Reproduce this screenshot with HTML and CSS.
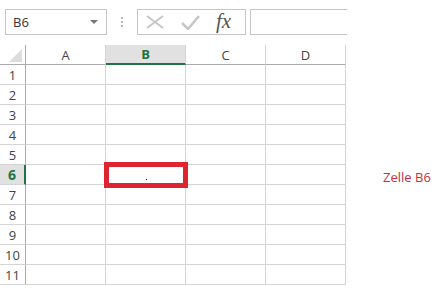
FILE: index.html
```html
<!DOCTYPE html>
<html lang="de">
<head>
    <meta charset="UTF-8">
    <title>Zelle B6</title>
    <link rel="stylesheet" href="styles.css">
</head>
<body>
    <div class="toolbar">
        <div class="name-box">
            <span>B6</span>
            <span class="arrow"></span>
        </div>
        <div class="dots"><i></i><i></i><i></i></div>
        <div class="fx-box">
            <svg class="icon" width="18" height="14" viewBox="0 0 18 14">
                <path d="M1 1 L17 13 M17 1 L1 13" stroke="#c6c6c6" stroke-width="2" fill="none"/>
            </svg>
            <svg class="icon" width="19" height="15" viewBox="0 0 19 15">
                <path d="M1 8 L7 14 L18 1" stroke="#c6c6c6" stroke-width="2.6" fill="none"/>
            </svg>
            <span class="fx">fx</span>
        </div>
        <div class="formula"></div>
    </div>

    <div class="wrap">
        <div class="sheet">
            <div class="corner"><span class="tri"></span></div>
            <div class="col">A</div>
            <div class="col active">B</div>
            <div class="col">C</div>
            <div class="col">D</div>

            <div class="row">1</div><div class="cell"></div><div class="cell"></div><div class="cell"></div><div class="cell"></div>
            <div class="row">2</div><div class="cell"></div><div class="cell"></div><div class="cell"></div><div class="cell"></div>
            <div class="row">3</div><div class="cell"></div><div class="cell"></div><div class="cell"></div><div class="cell"></div>
            <div class="row">4</div><div class="cell"></div><div class="cell"></div><div class="cell"></div><div class="cell"></div>
            <div class="row">5</div><div class="cell"></div><div class="cell"></div><div class="cell"></div><div class="cell"></div>
            <div class="row active">6</div><div class="cell"></div><div class="cell selected"><span class="mark"></span><span class="dot"></span></div><div class="cell"></div><div class="cell"></div>
            <div class="row">7</div><div class="cell"></div><div class="cell"></div><div class="cell"></div><div class="cell"></div>
            <div class="row">8</div><div class="cell"></div><div class="cell"></div><div class="cell"></div><div class="cell"></div>
            <div class="row">9</div><div class="cell"></div><div class="cell"></div><div class="cell"></div><div class="cell"></div>
            <div class="row">10</div><div class="cell"></div><div class="cell"></div><div class="cell"></div><div class="cell"></div>
            <div class="row">11</div><div class="cell"></div><div class="cell"></div><div class="cell"></div><div class="cell"></div>
        </div>
        <div class="label">Zelle B6</div>
    </div>
</body>
</html>
```

FILE: styles.css
```css
body {
    margin: 0;
    background: #fff;
    font-family: "Open Sans", "Liberation Sans", sans-serif;
    color: #444;
}

.toolbar {
    display: flex;
    align-items: center;
    height: 26px;
    padding: 9px 0 10px 5px;
}

.name-box {
    box-sizing: border-box;
    width: 102px;
    height: 26px;
    border: 1px solid #c6c6c6;
    display: flex;
    align-items: center;
    justify-content: space-between;
    padding: 0 8px 0 7px;
    font-size: 13px;
    color: #333;
}

.arrow {
    width: 0;
    height: 0;
    border-left: 4px solid transparent;
    border-right: 4px solid transparent;
    border-top: 4px solid #777;
}

.dots {
    width: 30px;
    display: flex;
    flex-direction: column;
    align-items: center;
    gap: 2px;
}

.dots i {
    width: 2px;
    height: 2px;
    background: #b5b5b5;
}

.fx-box {
    box-sizing: border-box;
    width: 109px;
    height: 26px;
    border: 1px solid #c6c6c6;
    display: flex;
    align-items: center;
    padding-left: 8px;
}

.icon {
    margin-right: 17px;
}

.fx {
    font-family: "Liberation Serif", serif;
    font-style: italic;
    font-size: 21px;
    color: #555;
    margin-left: -1px;
    margin-top: -2px;
}

.formula {
    box-sizing: border-box;
    width: 97px;
    height: 26px;
    margin-left: 4px;
    border: 1px solid #c6c6c6;
    border-right: none;
}

.wrap {
    display: flex;
}

.sheet {
    display: grid;
    grid-template-columns: 26px repeat(4, 80px);
    grid-template-rows: 20px;
    grid-auto-rows: 20px;
    width: 346px;
}

.sheet > div {
    box-sizing: border-box;
    border-right: 1px solid #d4d4d4;
    border-bottom: 1px solid #d4d4d4;
}

.corner {
    position: relative;
    border-right-color: #ababab !important;
    border-bottom-color: #ababab !important;
}

.tri {
    position: absolute;
    right: 3px;
    bottom: 2px;
    width: 0;
    height: 0;
    border-left: 13px solid transparent;
    border-bottom: 13px solid #dcdcdc;
}

.col {
    display: flex;
    align-items: center;
    justify-content: center;
    font-size: 13px;
    color: #444;
    border-bottom-color: #ababab !important;
}

.col.active {
    background: #e1e1e1;
    color: #217346;
    font-weight: bold;
    border-bottom: 2px solid #217346 !important;
}

.row {
    display: flex;
    align-items: center;
    justify-content: center;
    font-size: 13px;
    color: #444;
    border-right-color: #ababab !important;
}

.row.active {
    background: #e1e1e1;
    color: #217346;
    font-weight: bold;
    font-size: 14px;
    border-right: 2px solid #217346 !important;
}

.cell.selected {
    position: relative;
}

.mark {
    position: absolute;
    top: -3px;
    left: -2px;
    width: 84px;
    height: 26px;
    box-sizing: border-box;
    border: 5px solid #dd2430;
}

.dot {
    position: absolute;
    left: 40px;
    top: 14px;
    width: 1px;
    height: 1px;
    background: #000;
}

.label {
    margin-top: 122px;
    padding-left: 37px;
    font-size: 13px;
    color: #c8313b;
    height: 20px;
    line-height: 20px;
}
```
